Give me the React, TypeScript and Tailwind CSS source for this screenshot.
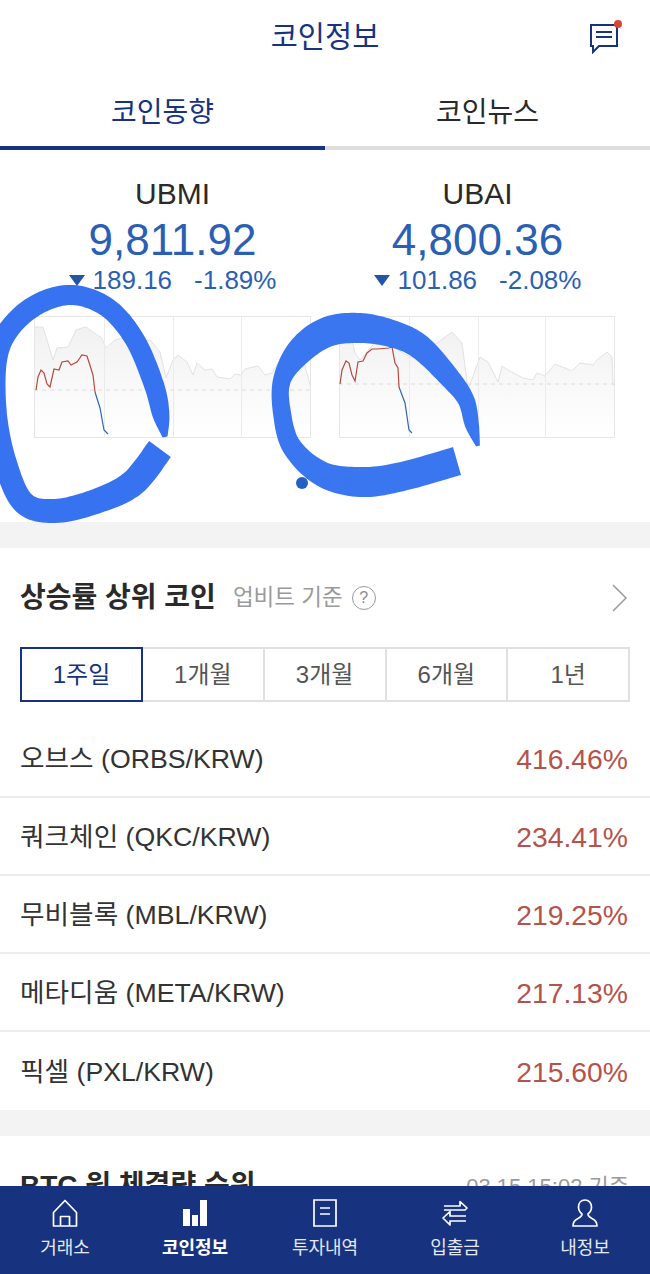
import React from "react";

type P = [number, number];
type W = [number, number, number];

const line = (pts: P[]) => pts.map((p) => p.join(",")).join(" ");

// Variable-width brush stroke: samples a Catmull-Rom spline and outlines it.
function brush(pts: W[]) {
  const at = (i: number) => pts[Math.max(0, Math.min(pts.length - 1, i))];
  const s: W[] = [];
  for (let i = 0; i < pts.length - 1; i++) {
    const [a, b, c, d] = [at(i - 1), at(i), at(i + 1), at(i + 2)];
    for (let k = 0; k < 12; k++) {
      const t = k / 12;
      const f = (n: number) =>
        0.5 *
        (2 * b[n] + (c[n] - a[n]) * t + (2 * a[n] - 5 * b[n] + 4 * c[n] - d[n]) * t * t + (3 * b[n] - a[n] - 3 * c[n] + d[n]) * t * t * t);
      s.push([f(0), f(1), f(2)]);
    }
  }
  s.push(pts[pts.length - 1]);
  const L: string[] = [];
  const R: string[] = [];
  s.forEach((q, i) => {
    const p0 = s[Math.max(0, i - 1)];
    const p1 = s[Math.min(s.length - 1, i + 1)];
    const dx = p1[0] - p0[0];
    const dy = p1[1] - p0[1];
    const l = Math.hypot(dx, dy) || 1;
    const nx = (-dy / l) * q[2] * 0.5;
    const ny = (dx / l) * q[2] * 0.5;
    L.push(`${(q[0] + nx).toFixed(1)},${(q[1] + ny).toFixed(1)}`);
    R.unshift(`${(q[0] - nx).toFixed(1)},${(q[1] - ny).toFixed(1)}`);
  });
  return `M${L.join("L")}L${R.join("L")}Z`;
}

const leftBrush = brush([
  [165, 437, 5], [161, 415, 17], [154, 385, 20], [135, 340, 20], [108, 308, 20], [73, 295, 20], [38, 304, 21], [10, 328, 21],
  [-4, 360, 22], [-4, 415, 22], [6, 465, 23], [24, 503, 23], [55, 511, 24], [97, 501, 25], [133, 483, 27], [160, 449, 27],
]);
const rightBrush = brush([
  [478, 446, 4], [472, 425, 14], [466, 400, 17], [449, 377, 21], [420, 347, 25], [393, 334, 27], [360, 328, 30], [327, 332, 30],
  [300, 351, 27], [282, 380, 18], [282, 413, 18], [292, 447, 20], [322, 474, 25], [360, 482, 30], [400, 477, 29], [457, 461, 29],
]);

const charts = [
  {
    box: "34 316 277 122",
    grid: [104, 173, 241],
    base: 390,
    x0: 34,
    x1: 311,
    area: [[35, 327], [43, 327], [53, 360], [57, 348], [68, 347], [76, 330], [82, 328], [86, 327], [97, 335], [102, 338], [106, 348], [115, 340], [122, 338], [130, 345], [150, 340], [160, 352], [166, 378], [173, 360], [178, 355], [187, 362], [193, 375], [197, 363], [205, 370], [212, 369], [217, 377], [230, 379], [235, 374], [241, 375], [245, 369], [258, 366], [265, 375], [272, 373], [277, 365], [302, 355], [308, 377], [311, 390]] as P[],
    red: [[36, 390], [38, 377], [41, 370], [44, 373], [47, 384], [50, 387], [54, 369], [59, 370], [62, 362], [68, 361], [71, 365], [77, 362], [82, 355], [87, 356], [93, 375], [95, 392]] as P[],
    blue: [[95, 392], [100, 408], [104, 430], [108, 434]] as P[],
  },
  {
    box: "339 316 277 122",
    grid: [409, 478, 545],
    base: 384,
    x0: 339,
    x1: 615,
    area: [[340, 320], [347, 322], [355, 353], [360, 360], [377, 340], [385, 332], [393, 347], [403, 353], [410, 357], [437, 343], [452, 332], [462, 343], [468, 390], [480, 357], [488, 362], [498, 382], [502, 366], [508, 370], [523, 378], [533, 380], [537, 373], [545, 376], [555, 364], [572, 371], [580, 363], [593, 365], [597, 360], [607, 352], [612, 357], [613, 384], [615, 385]] as P[],
    red: [[340, 384], [342, 370], [346, 361], [349, 363], [352, 375], [355, 381], [358, 362], [363, 361], [367, 353], [372, 349], [377, 349], [389, 348], [392, 347], [395, 363], [398, 368], [399, 387]] as P[],
    blue: [[399, 387], [405, 403], [409, 430], [412, 433]] as P[],
  },
];

function Chart({ c, id }: { c: (typeof charts)[number]; id: string }) {
  const bottom = 438;
  return (
    <svg viewBox={c.box} className="block h-[122px] w-[277px]">
      <defs>
        <linearGradient id={id} x1="0" y1="316" x2="0" y2="438" gradientUnits="userSpaceOnUse">
          <stop offset="0" stopColor="#f0f0f0" />
          <stop offset="1" stopColor="#ffffff" />
        </linearGradient>
      </defs>
      <polygon points={`${c.x0},${bottom} ${line(c.area)} ${c.x1},${bottom}`} fill={`url(#${id})`} />
      <polyline points={line(c.area)} fill="none" stroke="#e2e2e2" strokeWidth="1" />
      <rect x={c.x0 + 0.5} y="316.5" width={c.x1 - c.x0 - 1} height="121" fill="none" stroke="#e6e6e6" />
      {c.grid.map((x) => (
        <line key={x} x1={x + 0.5} x2={x + 0.5} y1="316" y2="438" stroke="#ebebeb" />
      ))}
      <line x1={c.x0} x2={c.x1} y1={c.base} y2={c.base} stroke="#dcdcdc" strokeDasharray="4 4" />
      <polyline points={line(c.red)} fill="none" stroke="#b5493f" strokeWidth="1.2" />
      <polyline points={line(c.blue)} fill="none" stroke="#2f66ad" strokeWidth="1.2" />
    </svg>
  );
}

function Index({ name, value, diff, pct, c, id }: { name: string; value: string; diff: string; pct: string; c: (typeof charts)[number]; id: string }) {
  return (
    <div className="flex w-[277px] flex-col items-center">
      <div className="mt-[28px] h-[32px] text-[30px] leading-[32px] text-[#2a2a2a]">{name}</div>
      <div className="mt-[4px] h-[51px] text-[44px] leading-[52px] text-[#2b5fb3]">{value}</div>
      <div className="flex h-[30px] items-center text-[26px] leading-[30px] text-[#2b5fb3]">
        <span className="mr-[8px] h-0 w-0 border-x-[8px] border-t-[11px] border-x-transparent border-t-[#2255a8]" />
        <span>{diff}</span>
        <span className="ml-[22px]">{pct}</span>
      </div>
      <div className="mt-[21px]">
        <Chart c={c} id={id} />
      </div>
    </div>
  );
}

function Heading({ title, children }: { title: string; children: React.ReactNode }) {
  return (
    <div className="flex h-[99px] items-center justify-between pl-[20px] pr-[21px] pt-[1px]">
      <div className="text-[28px] font-bold text-[#2a2a2a]">{title}</div>
      {children}
    </div>
  );
}

const periods = ["1주일", "1개월", "3개월", "6개월", "1년"];
const rows = [
  ["오브스 (ORBS/KRW)", "416.46%"],
  ["쿼크체인 (QKC/KRW)", "234.41%"],
  ["무비블록 (MBL/KRW)", "219.25%"],
  ["메타디움 (META/KRW)", "217.13%"],
  ["픽셀 (PXL/KRW)", "215.60%"],
];

const icon = "h-[30px] w-[30px] fill-none stroke-white stroke-[1.7]";
const navItems: { label: string; bold?: boolean; svg: React.ReactNode }[] = [
  {
    label: "거래소",
    svg: (
      <svg viewBox="0 0 30 30" className={icon}>
        <path d="M3.5 14.5 15 2.5l11.5 12v13.500h-23zM10.500 28v-9.500h9V28" strokeLinejoin="round" />
      </svg>
    ),
  },
  {
    label: "코인정보",
    bold: true,
    svg: (
      <svg viewBox="0 0 30 30" className="h-[30px] w-[30px] fill-white">
        <rect x="3" y="11" width="7" height="17" />
        <rect x="12" y="17" width="6" height="11" />
        <rect x="20" y="2" width="7" height="26" />
      </svg>
    ),
  },
  {
    label: "투자내역",
    svg: (
      <svg viewBox="0 0 30 30" className={icon}>
        <path d="M4 2h22v26H4zM10 10h10M10 16h10" />
      </svg>
    ),
  },
  {
    label: "입출금",
    svg: (
      <svg viewBox="0 0 30 30" className={icon}>
        <path d="M4 8h16V3.500L27 10l-2 2H4M26 18H10v-4.500L3 20l7 7v-4h16" strokeLinejoin="round" />
      </svg>
    ),
  },
  {
    label: "내정보",
    svg: (
      <svg viewBox="0 0 30 30" className={icon}>
        <path d="M15 2c-4 0-6.500 3-6.500 7 0 3 1.500 5.500 3.500 7 0 2-1 3-4 4.500-3 1.300-5 3-5 7.500h24c0-4.500-2-6.200-5-7.500-3-1.500-4-2.500-4-4.500 2-1.500 3.500-4 3.500-7 0-4-2.500-7-6.500-7z" strokeLinejoin="round" />
      </svg>
    ),
  },
];

export default function App() {
  return (
    <div className="relative h-[1274px] w-[650px] overflow-hidden bg-white font-['Liberation_Sans','Noto_Sans_CJK_KR',sans-serif]">
      <header className="relative flex h-[70px] items-center justify-center">
        <h1 className="pt-[5px] text-[29.5px] font-normal text-[#17337f]">코인정보</h1>
        <div className="absolute left-[588px] top-[20px]">
          <svg width="34" height="34" viewBox="0 0 34 34" className="fill-none stroke-[#17337f] stroke-2">
            <path d="M3 5h26v21H11l-6 6v-6H3zM8 12h16M8 17h16" />
            <circle cx="30" cy="4" r="4" className="fill-[#dc4435] stroke-none" />
          </svg>
        </div>
      </header>

      <nav className="flex h-[80px] text-[28px]">
        <div className="flex h-full w-[325px] items-center justify-center border-b-[4px] border-[#17337f] pt-[10px] text-[#17337f]">코인동향</div>
        <div className="flex h-full w-[325px] items-center justify-center border-b-[4px] border-[#dedede] pt-[10px] text-[#2a2a2a]">코인뉴스</div>
      </nav>

      <section className="relative h-[372px]">
        <div className="flex gap-[28px] pl-[34px]">
          <Index name="UBMI" value="9,811.92" diff="189.16" pct="-1.89%" c={charts[0]} id="g1" />
          <Index name="UBAI" value="4,800.36" diff="101.86" pct="-2.08%" c={charts[1]} id="g2" />
        </div>
        <div className="mt-[39px] flex justify-center gap-[11px]">
          <span className="h-[12px] w-[12px] rounded-full bg-[#2460c4]" />
          <span className="h-[12px] w-[12px] rounded-full bg-[#d4d4d4]" />
          <span className="h-[12px] w-[12px] rounded-full bg-[#d4d4d4]" />
        </div>
      </section>

      <div className="h-[26px] bg-[#f3f3f3]" />

      <section>
        <Heading title="상승률 상위 코인">
          <div className="ml-[17px] flex flex-1 items-center justify-between">
            <div className="flex items-center text-[22.5px] text-[#9a9a9a]">
              업비트 기준
              <span className="ml-[9px] flex h-[24px] w-[24px] items-center justify-center rounded-full border-[1.5px] border-[#9a9a9a] text-[16px] leading-none text-[#8a8a8a]">?</span>
            </div>
            <svg width="18" height="30" viewBox="0 0 18 30" className="fill-none stroke-[#9a9a9a] stroke-[1.5]">
              <path d="M2 2l13 13L2 28" />
            </svg>
          </div>
        </Heading>
        <div className="ml-[20px] flex h-[55px] w-[610px] text-[24px] text-[#555]">
          {periods.map((p, i) => (
            <div
              key={p}
              className={
                i === 0
                  ? "flex h-full w-[123px] items-center justify-center border-2 border-[#17337f] text-[#17337f]"
                  : "flex h-full flex-1 items-center justify-center border-y-2 border-r-2 border-[#e0e0e0]"
              }
            >
              {p}
            </div>
          ))}
        </div>
        <ul className="mt-[18px]">
          {rows.map(([name, pct], i) => (
            <li
              key={name}
              className={`flex h-[78px] items-center justify-between pl-[20px] pr-[22px] pt-[3px] text-[26.7px] ${i < 4 ? "border-b-2 border-[#ececec]" : ""}`}
            >
              <span className="text-[#333]">{name}</span>
              <span className="text-[28.3px] text-[#b5524c]">{pct}</span>
            </li>
          ))}
        </ul>
      </section>

      <div className="h-[26px] bg-[#f3f3f3]" />

      <section>
        <Heading title="BTC 원 체결량 순위">
          <div className="text-[22px] text-[#9a9a9a]">03.15 15:02 기준</div>
        </Heading>
      </section>

      <footer className="absolute inset-x-0 bottom-0 flex h-[88px] bg-[#17337f]">
        {navItems.map((n) => (
          <div key={n.label} className="flex flex-1 flex-col items-center pt-[12px] text-white">
            {n.svg}
            <span className={`mt-[8px] text-[18px] leading-[24px] ${n.bold ? "font-bold" : "text-[#e4e8f2]"}`}>{n.label}</span>
          </div>
        ))}
      </footer>

      <svg viewBox="0 0 650 1274" className="pointer-events-none absolute inset-0 h-[1274px] w-[650px] blur-[0.7px]">
        <path d={leftBrush} fill="#2f6cf0" fillOpacity="0.96" />
        <path d={rightBrush} fill="#3370f0" fillOpacity="0.96" />
      </svg>
    </div>
  );
}
